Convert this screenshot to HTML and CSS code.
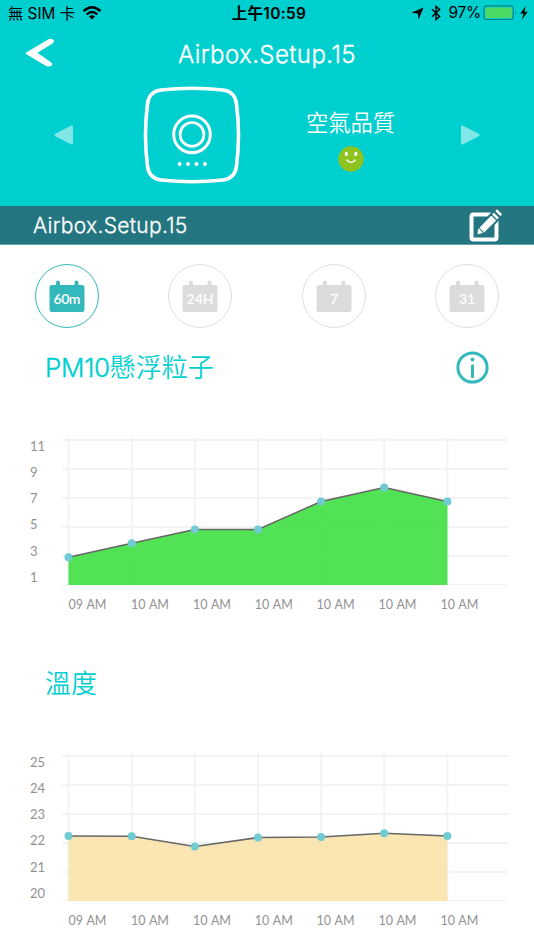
FILE: index.html
```html
<!DOCTYPE html>
<html lang="zh-Hant">
<head>
<meta charset="utf-8">
<title>Airbox.Setup.15</title>
<link rel="stylesheet" href="styles.css">
</head>
<body>
<header class="header">
  <div class="status">
    <div class="status-left"><span class="carrier">無 SIM 卡</span>
      <svg class="wifi" width="20" height="14" viewBox="0 0 20 14"><g fill="none" stroke="#000" stroke-width="2.500"><path d="M1.500 5.200Q10-2.600 18.500 5.200"/><path d="M4.600 8.400Q10 3.600 15.400 8.400"/></g><path d="M7 10.600Q10 8 13 10.600L10 13.600Z"/></svg>
    </div>
    <div class="clock">上午10:59</div>
    <div class="status-right">
      <svg width="13" height="13" viewBox="0 0 13 13"><path d="M12.500.500 7.600 12.600 6.800 6.400.300 5.800Z"/></svg>
      <svg class="bluetooth" width="10" height="16" viewBox="0 0 10 16"><path d="M1 4.300 8.600 11.400 5 14.600V1.400L8.600 4.600 1 11.700" fill="none" stroke="#000" stroke-width="1.400"/></svg>
      <span class="percent">97%</span>
      <svg class="battery" width="34" height="16" viewBox="0 0 34 16"><rect x=".9" y=".9" width="29.400" height="13.600" rx="3" fill="none" stroke="#078486" stroke-width="1.200"/><rect x="2.300" y="2.400" width="26.600" height="10.600" rx="1.600" fill="#4cd964"/><path d="M32 5.300q1.600 2.400 0 4.800z" fill="#078486"/></svg>
      <svg class="bolt" width="8" height="14" viewBox="0 0 8 14"><path d="M5.600.300.300 7.600H3.500L2 13.400 7.700 5.700H4.400Z"/></svg>
    </div>
  </div>
  <div class="nav">
    <svg class="back" width="30" height="30" viewBox="0 0 30 30"><path d="M2.200 14.600 25 1Q28.500-.1 30 2.800 30 4.700 28.600 5.400L13.400 14.800 27 24.300Q29 26 27.600 27.600 25.500 29.200 22.500 28.300L2.400 16.300Q1.300 15.400 2.200 14.600Z" fill="#fff"/></svg>
    <h1 class="nav-title">Airbox.Setup.15</h1>
  </div>
  <div class="device">
    <svg class="arrow" width="22" height="22" viewBox="0 0 22 22"><path d="M3 11 18.500 3v16Z" fill="#80e7e7" stroke="#80e7e7" stroke-width="3" stroke-linejoin="round"/></svg>
    <svg class="airbox" width="98" height="98" viewBox="0 0 98 98"><g fill="none" stroke="#fff"><path stroke-width="3.600" d="M18 4Q49 .500 80 4Q92 5.500 93.500 18Q97.500 49 93.500 80Q92 92.500 80 94Q49 97.500 18 94Q6 92.500 4.500 80Q.500 49 4.500 18Q6 5.500 18 4Z"/><circle cx="49" cy="48.400" r="18.300" stroke-width="3"/><circle cx="49" cy="48.400" r="11.900" stroke-width="2.700"/></g><g fill="#fff"><circle cx="36.600" cy="78" r="2"/><circle cx="45" cy="78" r="2"/><circle cx="53.500" cy="78" r="2"/><circle cx="62" cy="78" r="2"/></g></svg>
    <div class="quality">
      <div class="quality-label">空氣品質</div>
      <svg width="26" height="26" viewBox="0 0 26 26"><circle cx="13" cy="13" r="12.700" fill="#8fc31f"/><ellipse cx="8.300" cy="7.900" rx="1.600" ry="2.100" fill="#fff"/><ellipse cx="17.800" cy="7.900" rx="1.600" ry="2.100" fill="#fff"/><path d="M8.500 13.600q4.500 6 9 0" fill="none" stroke="#fff" stroke-width="1.500"/></svg>
    </div>
    <svg class="arrow" width="22" height="22" viewBox="0 0 22 22"><path d="M19 11 3.500 3v16Z" fill="#80e7e7" stroke="#80e7e7" stroke-width="3" stroke-linejoin="round"/></svg>
  </div>
</header>
<div class="namebar">
  <span class="name">Airbox.Setup.15</span>
  <svg class="edit" width="34" height="34" viewBox="0 0 34 34"><rect x="2.500" y="6.500" width="25" height="25" rx="2" fill="none" stroke="#fff" stroke-width="4"/><path d="M8 27 9.500 18 24.500 2 33 9.500 16 26.500Z" fill="#237580"/><path d="M8.800 25.800 9.800 20.800 13.500 24.700Z M10.800 19.800 22.300 8 26.800 12.500 15.200 24Z" fill="#fff" stroke="#fff" stroke-width=".8"/><path d="M24 5.600 29 10.600M27.200 2.200 32.200 7.200" stroke="#fff" stroke-width="2.600"/></svg>
</div>
<nav class="periods">
  <div class="period active"><svg width="36" height="32" viewBox="0 0 36 32"><rect x=".5" y="5" width="35" height="27" rx="2.500"/><rect x="7" y=".5" width="4" height="8" rx="2"/><rect x="25.500" y=".5" width="4" height="8" rx="2"/><text x="18" y="24.300" textLength="27">60m</text></svg></div>
  <div class="period"><svg width="36" height="32" viewBox="0 0 36 32"><rect x=".5" y="5" width="35" height="27" rx="2.500"/><rect x="7" y=".5" width="4" height="8" rx="2"/><rect x="25.500" y=".5" width="4" height="8" rx="2"/><text x="18" y="24.300" textLength="27">24H</text></svg></div>
  <div class="period"><svg width="36" height="32" viewBox="0 0 36 32"><rect x=".5" y="5" width="35" height="27" rx="2.500"/><rect x="7" y=".5" width="4" height="8" rx="2"/><rect x="25.500" y=".5" width="4" height="8" rx="2"/><text x="18" y="24.300">7</text></svg></div>
  <div class="period"><svg width="36" height="32" viewBox="0 0 36 32"><rect x=".5" y="5" width="35" height="27" rx="2.500"/><rect x="7" y=".5" width="4" height="8" rx="2"/><rect x="25.500" y=".5" width="4" height="8" rx="2"/><text x="18" y="24.300">31</text></svg></div>
</nav>
<main class="content">
  <section class="metric">
    <div class="metric-head">
      <h2><span class="latin">PM10</span>懸浮粒子</h2>
      <svg class="info" width="33" height="33" viewBox="0 0 33 33"><circle cx="16.500" cy="16.500" r="14.600" fill="none" stroke="#33b9bc" stroke-width="3"/><circle cx="16.500" cy="8.400" r="1.900" fill="#33b9bc"/><path d="M16.500 14.800v11" stroke="#33b9bc" stroke-width="3" stroke-linecap="round"/></svg>
    </div>
    <svg class="chart" width="534" height="196" viewBox="0 0 534 196">
      <path class="grid" d="M62 20H508M62 49H508M62 78H508M62 107H508M62 136H508M68.500 17V165M131.700 17V165M194.800 17V165M258 17V165M321.100 17V165M384.200 17V165M447.400 17V165"/><path class="grid base" d="M62 164.500H508"/>
      <path class="area green" d="M68.500 165V137.300L131.700 123.300 194.800 109.400H258L321.100 81.500 384.200 67.600 447.400 81.500V165Z"/>
      <path class="line" d="M68.500 137.300L131.700 123.300 194.800 109.400H258L321.100 81.500 384.200 67.600 447.400 81.500"/>
      <g class="dots"><circle cx="68.500" cy="137.300" r="4"/><circle cx="131.700" cy="123.300" r="4"/><circle cx="194.800" cy="109.400" r="4"/><circle cx="258" cy="109.400" r="4"/><circle cx="321.100" cy="81.500" r="4"/><circle cx="384.200" cy="67.600" r="4"/><circle cx="447.400" cy="81.500" r="4"/></g>
      <g class="labels"><text x="30" y="30.600">11</text><text x="30" y="56.600">9</text><text x="30" y="82.600">7</text><text x="30" y="108.800">5</text><text x="30" y="135.600">3</text><text x="30" y="161.600">1</text></g>
      <g class="labels times"><text x="68.500" y="188.500">09 AM</text><text x="131" y="188.500">10 AM</text><text x="193" y="188.500">10 AM</text><text x="254.800" y="188.500">10 AM</text><text x="316.600" y="188.500">10 AM</text><text x="378.500" y="188.500">10 AM</text><text x="440.400" y="188.500">10 AM</text></g>
    </svg>
  </section>
  <section class="metric">
    <div class="metric-head"><h2>溫度</h2></div>
    <svg class="chart" width="534" height="196" viewBox="0 0 534 196">
      <path class="grid" d="M62 20H508M62 49H508M62 78H508M62 107H508M62 136H508M68.500 17V165M131.700 17V165M194.800 17V165M258 17V165M321.100 17V165M384.200 17V165M447.400 17V165"/><path class="grid base" d="M62 164.500H508"/>
      <path class="area sand" d="M68.500 165V100L131.700 100.200 194.800 110.500 258 101.600 321.100 101 384.200 97.300 447.400 99.900V165Z"/>
      <path class="line" d="M68.500 100L131.700 100.200 194.800 110.500 258 101.600 321.100 101 384.200 97.300 447.400 99.900"/>
      <g class="dots"><circle cx="68.500" cy="100" r="4"/><circle cx="131.700" cy="100.200" r="4"/><circle cx="194.800" cy="110.500" r="4"/><circle cx="258" cy="101.600" r="4"/><circle cx="321.100" cy="101" r="4"/><circle cx="384.200" cy="97.300" r="4"/><circle cx="447.400" cy="99.900" r="4"/></g>
      <g class="labels"><text x="30" y="30.600">25</text><text x="30" y="56.600">24</text><text x="30" y="82.600">23</text><text x="30" y="108.800">22</text><text x="30" y="135.600">21</text><text x="30" y="161.600">20</text></g>
      <g class="labels times"><text x="68.500" y="188.500">09 AM</text><text x="131" y="188.500">10 AM</text><text x="193" y="188.500">10 AM</text><text x="254.800" y="188.500">10 AM</text><text x="316.600" y="188.500">10 AM</text><text x="378.500" y="188.500">10 AM</text><text x="440.400" y="188.500">10 AM</text></g>
    </svg>
  </section>
</main>
</body>
</html>
```
FILE: styles.css
```css
* { box-sizing: border-box; margin: 0; padding: 0; }
body { width: 534px; height: 950px; overflow: hidden; background: #fff; font-family: Inter, "Noto Sans CJK TC", sans-serif; }
svg { display: block; flex: none; }
.header { height: 206px; background: #00cfd0; color: #fff; }
.status { height: 28px; display: grid; grid-template-columns: 1fr auto 1fr; align-items: center; padding: 0 6px 2px 8px; color: #000; font-size: 16px; line-height: 28px; white-space: nowrap; }
.status-left, .status-right { display: flex; align-items: center; }
.status-left { gap: 7px; }
.status-right { justify-content: flex-end; margin-top: -2px; }
.carrier { font-size: 15.300px; }
.wifi { margin-top: -2px; }
.clock { font-weight: 600; font-size: 15.500px; letter-spacing: .3px; padding-left: 2px; }
.bluetooth { margin-left: 7px; }
.percent { margin-left: 8px; font-size: 15.500px; letter-spacing: -.3px; }
.battery { margin-left: 2px; }
.bolt { margin-left: 3px; }
.nav { height: 52px; display: grid; grid-template-columns: 54px 1fr 54px; align-items: center; }
.back { margin-left: 24px; margin-top: -2px; }
.nav-title { text-align: center; font-size: 24px; font-weight: 300; line-height: 52px; letter-spacing: .42px; padding-top: 1px; margin-bottom: -1px; -webkit-text-stroke: .4px #fff; }
.device { height: 126px; display: grid; grid-template-columns: 64px 192px 1fr 64px; padding: 0 32px; align-items: center; justify-items: center; }
.arrow { margin-bottom: 16px; }
.airbox { margin-bottom: 17px; }
.quality { width: 125px; justify-self: start; padding-bottom: 8px; display: flex; flex-direction: column; align-items: center; gap: 7px; }
.quality-label { font-size: 22.300px; font-weight: 350; line-height: 32px; }
.namebar { height: 39px; padding: 0 31px 0 33px; background: #237580; display: flex; align-items: center; justify-content: space-between; color: #fff; border-bottom: 1px solid #64a1a8; }
.name { font-size: 21px; font-weight: 300; letter-spacing: .3px; -webkit-text-stroke: .3px #fff; }
.edit { margin-bottom: 1px; }
.periods { height: 95px; padding-top: 19px; display: grid; grid-template-columns: repeat(4, 1fr); justify-items: center; align-items: start; }
.period { width: 64px; height: 64px; border: 1px solid #e0e0e0; border-radius: 50%; display: flex; justify-content: center; padding-top: 15px; fill: #dcdcdc; }
.period.active { border-color: #33b9bc; fill: #33b9bc; }
.period text { fill: #fff; font: 600 14px Lato, sans-serif; text-anchor: middle; }
.metric { height: 316px; }
.metric-head { height: 80px; padding: 11px 45px 0; display: flex; align-items: flex-start; justify-content: space-between; }
.metric-head h2 { font-size: 26px; line-height: 34px; font-weight: 350; color: #00cfd0; }
.latin { font-weight: 300; letter-spacing: -.3px; -webkit-text-stroke: .4px #00cfd0; }
.grid { fill: none; stroke: #f3f3f3; stroke-width: 2; }
.grid.base { stroke-width: 1; }
.area { fill-opacity: .9; }
.green { fill: #3fdf43; }
.sand { fill: #fae3ab; }
.line { fill: none; stroke: #666; stroke-width: 1.500; }
.dots { fill: #70cbd2; }
.labels { fill: #929292; font: 13px Lato, sans-serif; }
.times { font-size: 12.500px; word-spacing: .6px; }
```
